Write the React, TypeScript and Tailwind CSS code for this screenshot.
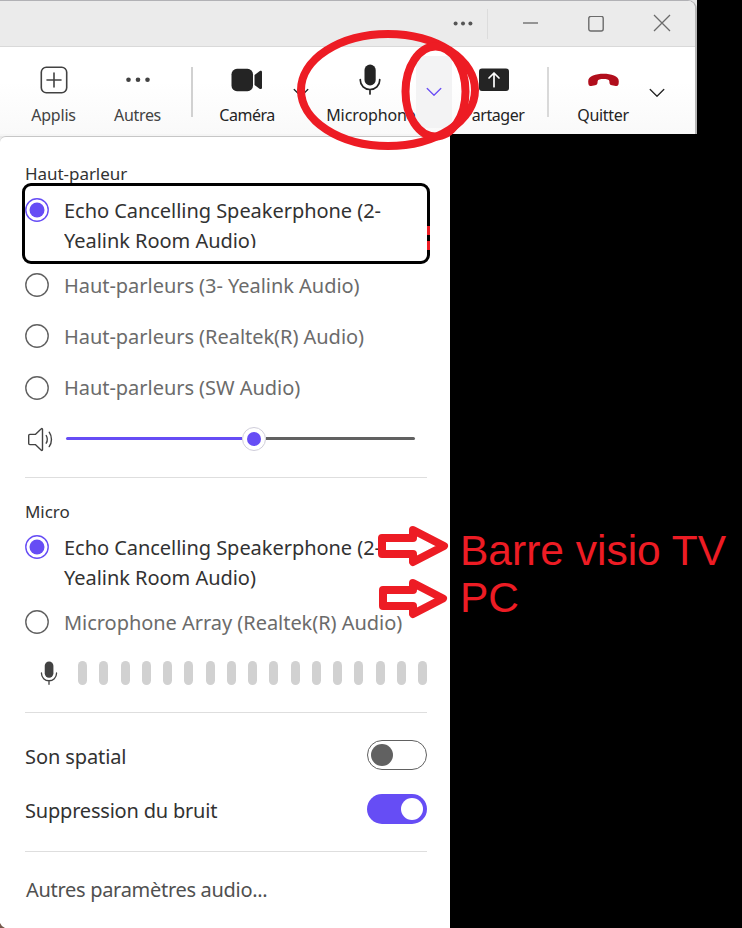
import React from "react";

const meterBars = Array.from({ length: 17 }, (_, i) => i);

function Radio({ checked = false }: { checked?: boolean }) {
  return (
    <svg className="size-6 shrink-0" viewBox="0 0 24 24" fill="none">
      <circle cx="12" cy="12" r="11.2" stroke={checked ? "#664df5" : "#616161"} strokeWidth="1.4" />
      {checked && <circle cx="12" cy="12" r="7.5" fill="#664df5" />}
    </svg>
  );
}

function Chevron({ color = "#242424" }: { color?: string }) {
  return (
    <svg width="16" height="10" viewBox="0 0 16 10" fill="none" stroke={color} strokeWidth="1.3" strokeLinecap="round" strokeLinejoin="round">
      <path d="M1.2 1.5 8 8.3l6.8-6.8" />
    </svg>
  );
}

function Mic({ className, color }: { className: string; color: string }) {
  return (
    <svg className={className} viewBox="0 0 22 31" fill="none">
      <rect x="5.5" y="0.5" width="11.2" height="21" rx="5.6" fill={color} />
      <path d="M1.3 15.5v.8a9.7 9.2 0 0 0 19.4 0v-.8M11 25.5V30" stroke={color} strokeWidth="1.7" strokeLinecap="round" />
    </svg>
  );
}

function Tool({ label, className, labelClass, children }: { label: string; className: string; labelClass: string; children: React.ReactNode }) {
  return (
    <div className={`flex shrink-0 flex-col items-center ${className}`}>
      <div className="flex h-[34px] items-center justify-center">{children}</div>
      <span className={`mt-[6px] whitespace-nowrap text-[16px] leading-[24px] ${labelClass}`}>{label}</span>
    </div>
  );
}

function Option({ label, className, labelClass = "mt-[2px]" }: { label: string; className: string; labelClass?: string }) {
  return (
    <div className={`flex h-[30px] items-center gap-[15px] text-[20px] leading-[30px] tracking-[-0.04px] text-[#6b6b6b] ${className}`}>
      <Radio />
      <span className={`whitespace-nowrap ${labelClass}`}>{label}</span>
    </div>
  );
}

function Divider() {
  return <div className="h-px w-[402px] bg-[#dedede]" />;
}

export default function App() {
  return (
    <div className="relative h-[928px] w-[742px] overflow-hidden bg-black font-['Noto_Sans','Open_Sans',sans-serif] text-[#323232]">
      <div className="h-[134px] w-[697px] bg-[#e4e4e4]">
        <div className="h-[134px] overflow-hidden rounded-tr-[9px] border-t border-r-2 border-t-[#b1b1b5] border-r-[#b5b5b5] bg-white">
          <header className="flex h-[46px] items-center justify-end border-b border-[#d9d9d9] bg-[#ebebeb]">
            <svg width="20" height="6" viewBox="0 0 20 6" fill="#555">
              <circle cx="2.6" cy="2.5" r="2" />
              <circle cx="10" cy="2.5" r="2" />
              <circle cx="17.4" cy="2.5" r="2" />
            </svg>
            <div className="ml-[14px] mr-[35px] h-[30px] w-px bg-[#dcdcdc]" />
            <svg className="-mt-[2px]" width="15" height="2" viewBox="0 0 15 2"><path d="M0 1h15" stroke="#777" strokeWidth="1.5" /></svg>
            <svg className="ml-[50px]" width="16" height="16" viewBox="0 0 16 16" fill="none" stroke="#6b6b6b" strokeWidth="1.4">
              <rect x="0.8" y="0.3" width="14.4" height="14.7" rx="2" />
            </svg>
            <svg className="ml-[49px] mr-[24px] -mt-px" width="18" height="18" viewBox="0 0 18 18" stroke="#6b6b6b" strokeWidth="1.3">
              <path d="M1 1l16 16M17 1 1 17" />
            </svg>
          </header>
          <nav className="flex h-[88px] items-start bg-linear-to-b from-white from-40% to-[#f9f9f9] pl-[12px] pt-[9px]">
            <Tool label="Applis" className="mt-[7px] w-[83px] text-[#424242]" labelClass="tracking-[-0.2px]">
              <svg width="28" height="28" viewBox="0 0 28 28" fill="none" stroke="#424242" strokeWidth="1.6" strokeLinecap="round">
                <rect x="1.3" y="1.3" width="25.4" height="25.4" rx="5" />
                <path d="M14 7v14M7 14h14" />
              </svg>
            </Tool>
            <Tool label="Autres" className="mt-[7px] w-[85px] text-[#424242]" labelClass="tracking-[-0.35px]">
              <svg width="26" height="6" viewBox="0 0 26 6" fill="#424242">
                <circle cx="3.5" cy="2.7" r="2.3" />
                <circle cx="13" cy="2.7" r="2.3" />
                <circle cx="22.5" cy="2.7" r="2.3" />
              </svg>
            </Tool>
            <div className="ml-[11px] mt-[11px] h-[50px] w-[2px] bg-[#d1d1d1]" />
            <Tool label="Caméra" className="ml-[14px] mt-[7px] w-[80px] text-[#242424]" labelClass="tracking-[-0.5px]">
              <svg width="32" height="24" viewBox="0 0 32 24" fill="#242424">
                <rect x="0.5" y="0.8" width="21.5" height="22.4" rx="5.5" />
                <path d="M23.5 7.1 28.5 3.2c1.2-.8 2.5-.2 2.5 1v15.6c0 1.2-1.3 1.7-2.5 1l-5-3.9z" />
              </svg>
            </Tool>
            <div className="mt-[32px] flex w-[28px] justify-center"><Chevron /></div>
            <Tool label="Microphone" className="ml-[9px] mt-[7px] w-[92px] text-[#242424]" labelClass="ml-[2px] tracking-[-0.1px]">
              <Mic className="-mt-px h-[31px] w-[22px]" color="#242424" />
            </Tool>
            <div className="flex h-[72px] w-[36px] items-center justify-center rounded bg-[#f3f3f4]"><Chevron color="#6a4df5" /></div>
            <Tool label="Partager" className="ml-[2px] mt-[7px] w-[80px] text-[#242424]" labelClass="-ml-px tracking-[-0.45px]">
              <svg width="30" height="24" viewBox="0 0 30 24" fill="none">
                <rect y="0.5" width="30" height="22.5" rx="3" fill="#242424" />
                <path d="M15 18.7V5.3M10 10l5-5 5 5" stroke="#fff" strokeWidth="1.7" strokeLinecap="round" strokeLinejoin="round" />
              </svg>
            </Tool>
            <div className="ml-[13px] mt-[11px] h-[50px] w-[2px] bg-[#d9d9d9]" />
            <Tool label="Quitter" className="ml-[14px] mt-[7px] w-[80px] text-[#242424]" labelClass="tracking-[-0.3px]">
              <svg className="-mt-px" width="31" height="14" viewBox="0 0 31 14" fill="#b10e1c">
                <path d="M15.5.8C23 .8 30.8 3 30.8 8.2c0 3.8-.8 5.2-3.1 4.8l-3.8-.8c-2.6-.5-2.3-2-2.6-4.2-.2-1.4-2.6-1.9-5.8-1.9S9.9 6.6 9.7 8c-.3 2.2 0 3.700-2.600 4.200l-3.800.8C1 13.400.2 12 .2 8.200.2 3 8 .8 15.500.8z" />
              </svg>
            </Tool>
            <div className="mt-[32px] flex w-[28px] justify-center"><Chevron /></div>
          </nav>
        </div>
      </div>

      <div className="h-[794px] w-[450px] bg-[#e9e9e9]">
        <div className="h-[2px] bg-[#f5f5f5]" />
        <main className="flex h-[792px] w-[450px] flex-col rounded-tl-[6px] border-t border-[#c6c6c6] bg-white pl-[25px]">
          <h2 className="mt-[25px] h-[21px] text-[17px] leading-[24px] tracking-[-0.05px]">Haut-parleur</h2>
          <div className="-ml-[3px] flex h-[81px] w-[408px] rounded-[9px] border-[3px] border-black pt-[12px]">
            <Radio checked />
            <p className="-mt-[2px] ml-[15px] h-[52px] overflow-hidden whitespace-nowrap text-[20px] leading-[30px] tracking-[-0.04px]">
              Echo Cancelling Speakerphone (2-<br />Yealink Room Audio)
            </p>
          </div>
          <Option className="mt-[6px]" label="Haut-parleurs (3- Yealink Audio)" />
          <Option className="mt-[21px]" label="Haut-parleurs (Realtek(R) Audio)" />
          <Option className="mt-[22px]" label="Haut-parleurs (SW Audio)" labelClass="" />
          <div className="mt-[23px] flex h-[26px] items-center">
            <svg className="ml-[2px]" width="26" height="26" viewBox="0 0 26 26" fill="none" stroke="#424242" strokeWidth="1.4" strokeLinecap="round" strokeLinejoin="round">
              <path d="M2.8 8.4h5.5l6-5.6c.5-.5 1.2-.2 1.2.4v20.6c0 .6-.7.9-1.2.4l-6-5.6H2.8c-.6 0-1.1-.5-1.1-1.1v-8c0-.6.5-1.1 1.1-1.1zM19.2 9.5c1.3 2.2 1.3 5.5 0 7.7M22.2 6.2c3 4.2 3 10.2 0 14.4" />
            </svg>
            <div className="ml-[13px] flex h-6 w-[349px] items-center">
              <div className="mb-px h-[3px] w-[176px] rounded-l-full bg-[#664df5]" />
              <div className="flex size-6 items-center justify-center rounded-full border border-[#cfcdda] bg-white"><span className="size-[14px] rounded-full bg-[#664df5]" /></div>
              <div className="mb-px h-[3px] w-[149px] rounded-r-full bg-[#616161]" />
            </div>
          </div>
          <div className="mt-[25px]"><Divider /></div>
          <h2 className="mt-[22px] h-[24px] text-[17px] leading-[24px] tracking-[-0.05px]">Micro</h2>
          <div className="mt-[11px] flex h-[60px] gap-[15px]">
            <Radio checked />
            <p className="-mt-[2px] whitespace-nowrap text-[20px] leading-[30px] tracking-[-0.04px]">Echo Cancelling Speakerphone (2-<br />Yealink Room Audio)</p>
          </div>
          <Option className="mt-[12px]" label="Microphone Array (Realtek(R) Audio)" />
          <div className="mt-[24px] flex h-[24px] items-center">
            <Mic className="ml-[15px] h-[24px] w-[18px]" color="#424242" />
            <div className="ml-[20px] flex h-6 w-[349px] justify-between">
              {meterBars.map((i) => <span key={i} className="h-6 w-[9px] rounded-full bg-[#d1d1d1]" />)}
            </div>
          </div>
          <div className="mt-[27px]"><Divider /></div>
          <div className="mt-[27px] flex h-[30px] w-[402px] items-center justify-between">
            <span className="mt-[4px] text-[20px] leading-[30px] tracking-[-0.1px]">Son spatial</span>
            <span className="flex h-[30px] w-[60px] items-center rounded-full border border-[#616161] pl-[3px]"><span className="size-[22px] rounded-full bg-[#616161]" /></span>
          </div>
          <div className="mt-[24px] flex h-[30px] w-[402px] items-center justify-between">
            <span className="mt-[4px] text-[20px] leading-[30px] tracking-[-0.2px]">Suppression du bruit</span>
            <span className="flex h-[30px] w-[60px] items-center justify-end rounded-full bg-[#664df5] pr-[4px]"><span className="size-[22px] rounded-full bg-white" /></span>
          </div>
          <div className="mt-[27px]"><Divider /></div>
          <div className="ml-px mt-[23px] text-[20px] leading-[30px] tracking-[-0.3px] text-[#505050]">Autres paramètres audio...</div>
        </main>
      </div>

      <svg className="absolute left-0 top-0" width="742" height="928" viewBox="0 0 742 928" fill="none" stroke="#ed1c24" strokeWidth="8" strokeLinejoin="round">
        <ellipse cx="388" cy="90" rx="87" ry="56" />
        <ellipse cx="435.5" cy="91.5" rx="30" ry="45" />
        <path d="M382 538h31v-8l31 16-31 16v-8h-31z" fill="#fff" />
        <path d="M383 590h30v-7l30 15.500-30 15.500v-8h-30z" fill="#fff" />
        <path d="M427 226h3v9h-3zM427 241h3v9h-3z" fill="#ed1c24" stroke="none" />
        <path d="M0 923q1 3 5 5H0z" fill="#75594c" stroke="none" />
      </svg>
      <p className="absolute left-[460px] top-[527px] whitespace-nowrap font-['Liberation_Sans',sans-serif] text-[42.5px] leading-[47px] text-[#ed1c24]">Barre visio TV<br />PC</p>
    </div>
  );
}
